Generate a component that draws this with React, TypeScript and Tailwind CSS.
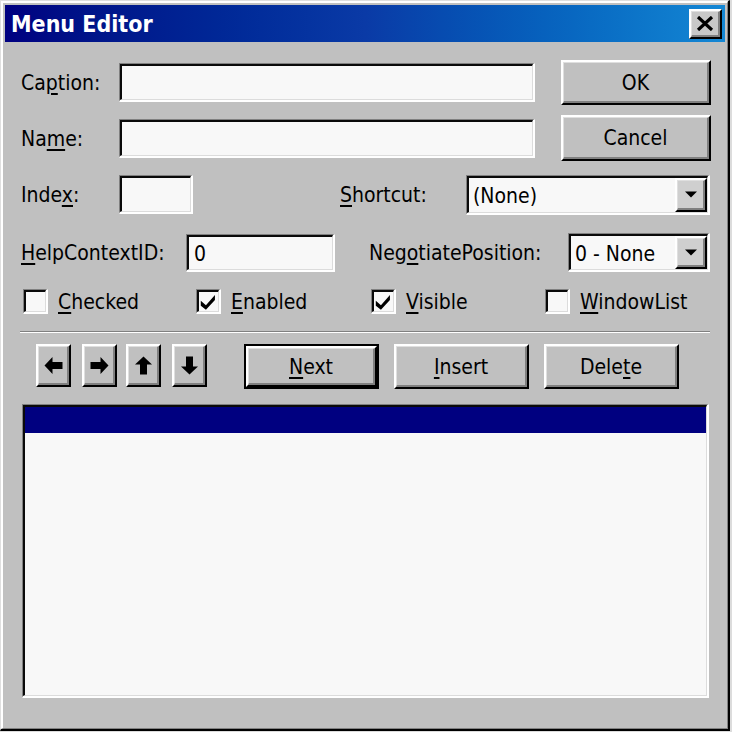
import type { ReactNode } from 'react';

const font = { fontFamily: '"DejaVu Sans Condensed", "Liberation Sans", Arial, sans-serif' };

function Sunken({ className, children }: { className?: string; children?: ReactNode }) {
  return (
    <div className={`border-t border-l border-t-[#808080] border-l-[#808080] border-b-2 border-r-2 border-b-white border-r-white ${className ?? ''}`}>
      <div className="h-full w-full border-t-2 border-l-2 border-t-[#0a0a0a] border-l-[#0a0a0a] border-b border-r border-b-[#dcdcdc] border-r-[#dcdcdc] bg-[#f8f8f8] flex items-center">
        {children}
      </div>
    </div>
  );
}

function Raised({ className, children }: { className?: string; children?: ReactNode }) {
  return (
    <div className={`border-t-2 border-l-2 border-t-white border-l-white border-b-2 border-r-2 border-b-black border-r-black ${className ?? ''}`}>
      <div className="h-full w-full border-t border-l border-t-[#dfdfdf] border-l-[#dfdfdf] border-b-2 border-r-2 border-b-[#808080] border-r-[#808080] flex items-center justify-center">
        {children}
      </div>
    </div>
  );
}

function U({ children }: { children: ReactNode }) {
  return <span className="underline underline-offset-[3px] decoration-[1.5px]">{children}</span>;
}

function Combo({ className, value }: { className: string; value: string }) {
  return (
    <Sunken className={className}>
      <span className="flex-1 pl-[4px] pt-[3px] leading-none">{value}</span>
      <Raised className="w-[32px] h-full bg-[#cfcfcf]">
        <svg width="12" height="7" viewBox="0 0 14 7">
          <polygon points="0,0 14,0 7,7" fill="#000" />
        </svg>
      </Raised>
    </Sunken>
  );
}

function Check({ checked, label, className }: { checked?: boolean; label: ReactNode; className: string }) {
  return (
    <div className={`flex items-center ${className}`}>
      <Sunken className="w-[25px] h-[25px]">
        {checked && (
          <svg width="19" height="18" viewBox="0 0 14 14" className="mx-auto">
            <polygon points="1,6 5,9.5 12,1.5 12,5.5 5,13 1,10" fill="#000" />
          </svg>
        )}
      </Sunken>
      <span className="ml-[10px] pt-[3px]">{label}</span>
    </div>
  );
}

function Arrow({ points, w, h, vb, className }: { points: string; w: number; h: number; vb: string; className: string }) {
  return (
    <Raised className={`w-[35px] h-[43px] ${className}`}>
      <svg width={w} height={h} viewBox={vb}>
        <polygon points={points} fill="#000" />
      </svg>
    </Raised>
  );
}

export default function App() {
  return (
    <div className="w-[732px] h-[732px] bg-[#dcdcdc] text-[21px] text-black" style={font}>
      <div className="w-[730px] h-[731px] border-t border-l border-t-[#dfdfdf] border-l-[#dfdfdf] border-b-2 border-r-2 border-b-black border-r-black bg-[#c0c0c0]">
        <div className="h-full border-t-2 border-l-2 border-t-white border-l-white border-b border-r border-b-[#808080] border-r-[#808080] pt-[2px] px-[2px]">
          {/* title bar */}
          <div className="h-[37px] flex items-center bg-linear-to-r from-[#000080] via-[#0a3aa6] to-[#1487d4]">
            <span className="pl-[6px] pt-[1px] text-white font-bold text-[23px] flex-1">Menu Editor</span>
            <Raised className="w-[33px] h-[30px] mr-[3px] bg-[#c8c8c8]">
              <svg width="18" height="15" viewBox="0 0 18 15">
                <path d="M2 1 L16 14 M16 1 L2 14" stroke="#000" strokeWidth="3.2" />
              </svg>
            </Raised>
          </div>

          {/* caption */}
          <div className="mt-[18px] h-[45px] flex items-center pl-[16px]">
            <span className="w-[98px] pt-[3px]">Ca<U>p</U>tion:</span>
            <Sunken className="w-[416px] h-[39px]" />
            <Raised className="ml-[26px] w-[150px] h-[45px]"><span className="pt-[3px]">OK</span></Raised>
          </div>

          {/* name */}
          <div className="mt-[10px] h-[46px] flex items-center pl-[16px]">
            <span className="w-[98px] pt-[3px]">Na<U>m</U>e:</span>
            <Sunken className="w-[416px] h-[39px]" />
            <Raised className="ml-[26px] w-[150px] h-[46px]"><span className="pt-[3px]">Cancel</span></Raised>
          </div>

          {/* index / shortcut */}
          <div className="mt-[13px] h-[41px] flex items-center pl-[16px]">
            <span className="w-[98px] pt-[3px]">Inde<U>x</U>:</span>
            <Sunken className="w-[74px] h-[39px]" />
            <span className="ml-[147px] w-[126px] pt-[3px]"><U>S</U>hortcut:</span>
            <Combo className="w-[244px] h-[40px]" value="(None)" />
          </div>

          {/* help context / negotiate */}
          <div className="mt-[18px] h-[39px] flex items-center pl-[16px]">
            <span className="w-[165px] pt-[2px]"><U>H</U>elpContextID:</span>
            <Sunken className="w-[149px] h-[38px]">
              <span className="pl-[5px] pt-[3px] leading-none">0</span>
            </Sunken>
            <span className="ml-[34px] w-[199px] pt-[2px]">Neg<U>o</U>tiatePosition:</span>
            <Combo className="w-[142px] h-[39px]" value="0 - None" />
          </div>

          {/* checkboxes */}
          <div className="mt-[17px] h-[25px] flex items-center pl-[18px]">
            <Check className="w-[173px]" label={<><U>C</U>hecked</>} />
            <Check className="w-[175px]" checked label={<><U>E</U>nabled</>} />
            <Check className="w-[174px]" checked label={<><U>V</U>isible</>} />
            <Check className="" label={<><U>W</U>indowList</>} />
          </div>

          {/* separator */}
          <div className="mt-[17px] ml-[15px] w-[690px] h-[2px] border-t border-t-[#808080] border-b border-b-white" />

          {/* buttons */}
          <div className="mt-[11px] h-[45px] flex items-start pl-[31px]">
            <Arrow className="" points="0,8.5 8,0 8,5 18,5 18,12 8,12 8,17" w={19} h={17} vb="0 0 18 17" />
            <Arrow className="ml-[11px]" points="18,8.5 10,0 10,5 0,5 0,12 10,12 10,17" w={19} h={17} vb="0 0 18 17" />
            <Arrow className="ml-[9px]" points="8.5,0 17,8 12,8 12,18 5,18 5,8 0,8" w={17} h={19} vb="0 0 17 18" />
            <Arrow className="ml-[11px]" points="8.5,18 17,10 12,10 12,0 5,0 5,10 0,10" w={17} h={19} vb="0 0 17 18" />
            <div className="ml-[37px] w-[135px] h-[45px] border-2 border-black">
              <Raised className="w-full h-full"><span className="pt-[3px]"><U>N</U>ext</span></Raised>
            </div>
            <Raised className="ml-[15px] w-[135px] h-[45px]"><span className="pt-[3px]"><U>I</U>nsert</span></Raised>
            <Raised className="ml-[15px] w-[135px] h-[45px]"><span className="pt-[3px]">Dele<U>t</U>e</span></Raised>
          </div>

          {/* menu list */}
          <div className="mt-[15px] ml-[17px] w-[687px] h-[294px] border-t border-l border-t-[#808080] border-l-[#808080] border-b-2 border-r-2 border-b-white border-r-white">
            <div className="h-full w-full border-t-2 border-l-2 border-t-[#0a0a0a] border-l-[#0a0a0a] border-b border-r border-b-[#dcdcdc] border-r-[#dcdcdc] bg-[#f8f8f8]">
              <div className="h-[26px] bg-[#000080]" />
            </div>
          </div>
        </div>
      </div>
    </div>
  );
}
